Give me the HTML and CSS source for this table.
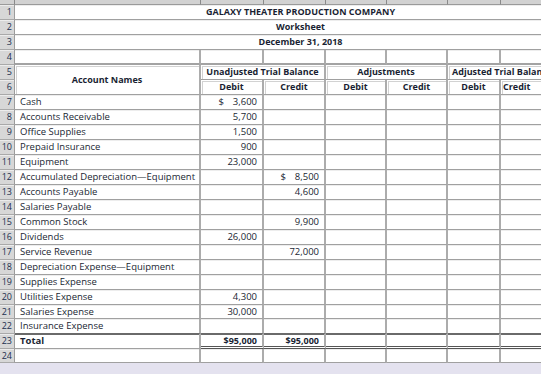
FILE: index.html
```html
<!DOCTYPE html>
<html>
<head>
<meta charset="utf-8">
<title>Worksheet</title>
<link rel="stylesheet" href="styles.css">
</head>
<body>
<div class="sheet">
  <div class="row strip"><div class="rn"></div><div class="c"></div><div class="c"></div><div class="c"></div><div class="c"></div><div class="c"></div><div class="c"></div><div class="c"></div></div>

  <div class="row"><div class="rn">1</div><div class="c title">GALAXY THEATER PRODUCTION COMPANY</div></div>
  <div class="row"><div class="rn">2</div><div class="c title">Worksheet</div></div>
  <div class="row"><div class="rn">3</div><div class="c title">December 31, 2018</div></div>
  <div class="row r4"><div class="rn">4</div><div class="c"></div><div class="c"></div><div class="c"></div><div class="c"></div><div class="c"></div><div class="c"></div><div class="c"></div></div>

  <div class="row head"><div class="rn">5</div><div class="c hd acct">Account Names</div><div class="c hd span2">Unadjusted Trial Balance</div><div class="c hd span2">Adjustments</div><div class="c hd span2 clip">Adjusted Trial Balance</div></div>
  <div class="row head"><div class="rn">6</div><div class="c hd">Debit</div><div class="c hd">Credit</div><div class="c hd">Debit</div><div class="c hd">Credit</div><div class="c hd">Debit</div><div class="c hd last">Credit</div></div>

  <div class="row"><div class="rn">7</div><div class="c name">Cash</div><div class="c num"><span class="d">$</span>3,600</div><div class="c num"></div><div class="c"></div><div class="c"></div><div class="c"></div><div class="c"></div></div>
  <div class="row"><div class="rn">8</div><div class="c name">Accounts Receivable</div><div class="c num">5,700</div><div class="c num"></div><div class="c"></div><div class="c"></div><div class="c"></div><div class="c"></div></div>
  <div class="row"><div class="rn">9</div><div class="c name">Office Supplies</div><div class="c num">1,500</div><div class="c num"></div><div class="c"></div><div class="c"></div><div class="c"></div><div class="c"></div></div>
  <div class="row"><div class="rn">10</div><div class="c name">Prepaid Insurance</div><div class="c num">900</div><div class="c num"></div><div class="c"></div><div class="c"></div><div class="c"></div><div class="c"></div></div>
  <div class="row"><div class="rn">11</div><div class="c name">Equipment</div><div class="c num">23,000</div><div class="c num"></div><div class="c"></div><div class="c"></div><div class="c"></div><div class="c"></div></div>
  <div class="row"><div class="rn">12</div><div class="c name">Accumulated Depreciation—Equipment</div><div class="c num"></div><div class="c num"><span class="d">$</span>8,500</div><div class="c"></div><div class="c"></div><div class="c"></div><div class="c"></div></div>
  <div class="row"><div class="rn">13</div><div class="c name">Accounts Payable</div><div class="c num"></div><div class="c num">4,600</div><div class="c"></div><div class="c"></div><div class="c"></div><div class="c"></div></div>
  <div class="row"><div class="rn">14</div><div class="c name">Salaries Payable</div><div class="c num"></div><div class="c num"></div><div class="c"></div><div class="c"></div><div class="c"></div><div class="c"></div></div>
  <div class="row"><div class="rn">15</div><div class="c name">Common Stock</div><div class="c num"></div><div class="c num">9,900</div><div class="c"></div><div class="c"></div><div class="c"></div><div class="c"></div></div>
  <div class="row"><div class="rn">16</div><div class="c name">Dividends</div><div class="c num">26,000</div><div class="c num"></div><div class="c"></div><div class="c"></div><div class="c"></div><div class="c"></div></div>
  <div class="row"><div class="rn">17</div><div class="c name">Service Revenue</div><div class="c num"></div><div class="c num">72,000</div><div class="c"></div><div class="c"></div><div class="c"></div><div class="c"></div></div>
  <div class="row"><div class="rn">18</div><div class="c name">Depreciation Expense—Equipment</div><div class="c num"></div><div class="c num"></div><div class="c"></div><div class="c"></div><div class="c"></div><div class="c"></div></div>
  <div class="row"><div class="rn">19</div><div class="c name">Supplies Expense</div><div class="c num"></div><div class="c num"></div><div class="c"></div><div class="c"></div><div class="c"></div><div class="c"></div></div>
  <div class="row"><div class="rn">20</div><div class="c name">Utilities Expense</div><div class="c num">4,300</div><div class="c num"></div><div class="c"></div><div class="c"></div><div class="c"></div><div class="c"></div></div>
  <div class="row"><div class="rn">21</div><div class="c name">Salaries Expense</div><div class="c num">30,000</div><div class="c num"></div><div class="c"></div><div class="c"></div><div class="c"></div><div class="c"></div></div>
  <div class="row above-total"><div class="rn">22</div><div class="c name">Insurance Expense</div><div class="c num"></div><div class="c num"></div><div class="c"></div><div class="c"></div><div class="c"></div><div class="c"></div></div>
  <div class="row total"><div class="rn">23</div><div class="c name">Total</div><div class="c num">$95,000</div><div class="c num">$95,000</div><div class="c"></div><div class="c"></div><div class="c"></div><div class="c"></div></div>
  <div class="row"><div class="rn">24</div><div class="c"></div><div class="c"></div><div class="c"></div><div class="c"></div><div class="c"></div><div class="c"></div><div class="c"></div></div>
</div>
</body>
</html>
```

FILE: styles.css
```css
html, body {
  margin: 0;
  padding: 0;
}

body {
  background: #e4e2ef;
  overflow: hidden;
  font-family: "Open Sans", "Noto Sans", sans-serif;
  font-size: 9px;
  color: #1a1f33;
}

.sheet {
  display: grid;
  width: 554px;
  grid-template-columns: 15px 186px 63px 62px 61px 61px 53px 53px;
  grid-template-rows: 5px repeat(20, 15px) 14px 15px 15px 14px;
  background: #ffffff;
}

.row {
  display: contents;
}

.rn {
  grid-column: 1;
  box-sizing: border-box;
  background: #d7d7d7;
  border-right: 1px solid #9c9c9c;
  border-bottom: 1px solid #a9a9a9;
  box-shadow: inset 0 1px 0 #ececec;
  text-align: right;
  padding-right: 2px;
  font-size: 9px;
  line-height: 14px;
  color: #22304f;
}

.c {
  box-sizing: border-box;
  border-right: 2px solid #acacac;
  border-bottom: 1px solid #a0a0a0;
  box-shadow: inset 0 1px 0 #ededed;
  line-height: 14px;
  white-space: nowrap;
  overflow: hidden;
}

.strip .rn,
.strip .c {
  background: #d2d2d2;
  border-right: 1px solid #8a8a8a;
  border-bottom: 1px solid #9a9a9a;
  box-shadow: none;
}

.title {
  grid-column: 2 / -1;
  border-right: none;
  text-align: center;
  font-weight: 700;
  padding-left: 32px;
}

.r4 .c {
  border-bottom: 2px solid #a3a3a3;
}

.hd {
  text-align: center;
  font-weight: 700;
  box-shadow: inset 1px 1px 0 #ffffff, inset 2px 2px 0 #d2d2d2;
}

.acct {
  grid-row: span 2;
  display: flex;
  align-items: center;
  justify-content: center;
}

.span2 {
  grid-column: span 2;
}

.clip {
  text-align: left;
  padding-left: 4px;
  border-right: none;
}

.hd.last {
  text-align: left;
  padding-left: 2px;
}

.name {
  padding-left: 5px;
  font-size: 9.5px;
}

.num {
  text-align: right;
  padding-right: 5px;
  font-size: 9.5px;
}

.d {
  margin-right: 9px;
}

.above-total .c {
  border-bottom-color: #6a6a6a;
}

.total .c {
  box-shadow: inset 0 1px 0 #6a6a6a;
  font-weight: 700;
}

.total .num {
  font-size: 9px;
}

.total .c:not(.name) {
  border-bottom: 3px double #555555;
}

.total .name {
  border-bottom-color: #a0a0a0;
}
```
